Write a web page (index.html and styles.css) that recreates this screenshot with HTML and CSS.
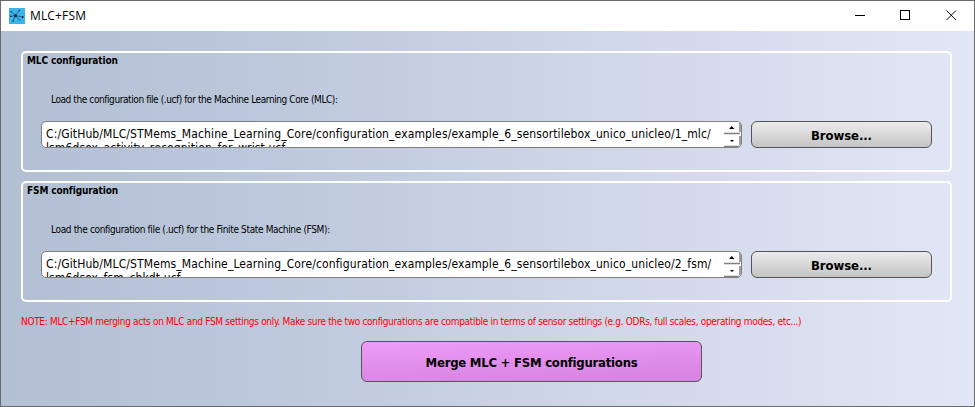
FILE: index.html
```html
<!DOCTYPE html>
<html lang="en">
<head>
<meta charset="utf-8">
<title>MLC+FSM</title>
<link rel="stylesheet" href="styles.css">
</head>
<body>
<div class="window">
  <header class="titlebar">
    <svg class="app-icon" width="16" height="16" viewBox="0 0 16 16">
      <rect width="16" height="16" fill="#3cb4e7"/>
      <path d="M6.500 7.500 2 3.500M6.500 7.500 1.500 8.500M6.500 7.500 10 2.500M6.500 7.500l7 1.500M6.500 7.500 4 13M6.500 7.500l5 5.500" stroke="#03234b" stroke-width=".5"/>
      <g fill="#03234b"><circle cx="6.500" cy="7.700" r="1.500"/><circle cx="2" cy="3.700" r=".7"/><circle cx="1.800" cy="8.300" r=".7"/><circle cx="10.300" cy="2.500" r=".7"/><circle cx="13.700" cy="9" r="1"/><circle cx="4" cy="13" r=".7"/></g>
    </svg>
    <h1 class="title">MLC+FSM</h1>
    <svg class="controls" width="119" height="30" viewBox="0 0 119 30" fill="none" stroke="#000">
      <path d="M0 14.500h10" /><rect x="45.500" y="9.500" width="9" height="9"/><path d="m91.500 9.500 9.500 9.500m0-9.500-9.500 9.500"/>
    </svg>
  </header>
  <main class="content">
    <section class="group">
      <h2 class="legend">MLC configuration</h2>
      <p class="label label-mlc">Load the configuration file (.ucf) for the Machine Learning Core (MLC):</p>
      <div class="row">
        <div class="field">
          <div class="path"><div class="line">C:/GitHub/MLC/STMems_Machine_Learning_Core/configuration_examples/example_6_sensortilebox_unico_unicleo/1_mlc/</div><div class="line">lsm6dsox_activity_recognition_for_wrist.ucf</div></div>
          <svg class="spin" width="18" height="25" viewBox="0 0 18 25"><path d="M1 11.500h16M1 24.500h16M17 1v9M17 14v9" stroke="#808080" stroke-width="1.500"/><path d="M6 7h5.500L8.750 4zM7 18h4l-2 2z"/></svg>
        </div>
        <button class="browse"><span>Browse...</span></button>
      </div>
    </section>
    <section class="group">
      <h2 class="legend">FSM configuration</h2>
      <p class="label label-fsm">Load the configuration file (.ucf) for the Finite State Machine (FSM):</p>
      <div class="row">
        <div class="field">
          <div class="path"><div class="line">C:/GitHub/MLC/STMems_Machine_Learning_Core/configuration_examples/example_6_sensortilebox_unico_unicleo/2_fsm/</div><div class="line">lsm6dsox_fsm_chkdt.ucf</div></div>
          <svg class="spin" width="18" height="25" viewBox="0 0 18 25"><path d="M1 11.500h16M1 24.500h16M17 1v9M17 14v9" stroke="#808080" stroke-width="1.500"/><path d="M6 7h5.500L8.750 4zM7 18h4l-2 2z"/></svg>
        </div>
        <button class="browse"><span>Browse...</span></button>
      </div>
    </section>
    <p class="note">NOTE: MLC+FSM merging acts on MLC and FSM settings only. Make sure the two configurations are compatible in terms of sensor settings (e.g. ODRs, full scales, operating modes, etc...)</p>
    <button class="merge"><span>Merge MLC + FSM configurations</span></button>
  </main>
</div>
</body>
</html>
```
FILE: styles.css
```css
* { box-sizing: border-box; margin: 0; padding: 0; }
body { font-family: "DejaVu Sans Condensed", "DejaVu Sans", sans-serif; font-stretch: condensed; color: #000; overflow: hidden; }
.window { width: 975px; height: 407px; border: 1px solid #6b6b6b; background: linear-gradient(90deg, #b3c0d4, #bac6da 22%, #c5cee1 42%, #d4daeb 70%, #e1e7f6); }
.titlebar { display: flex; align-items: center; height: 30px; padding: 0 0 0 8px; background: #fff; }
.app-icon { margin-top: -1px; }
.title { margin: -1px 0 0 5px; font: 12px "Open Sans", sans-serif; letter-spacing: .15px; }
.controls { margin-left: auto; }
.content { padding: 20px 22px 0 20px; }
.group { height: 121px; margin-bottom: 9px; border: 2px solid #fff; border-radius: 5px; padding: 1px 18px 0; }
.legend { margin-left: -14px; font-size: 10px; font-weight: bold; line-height: 14px; letter-spacing: -.11px; white-space: nowrap; }
.label { margin: 25px 0 0 10px; font-size: 10px; line-height: 13px; white-space: nowrap; }
.label-mlc { letter-spacing: -.41px; }
.label-fsm { letter-spacing: -.35px; }
.row { display: flex; gap: 9px; margin-top: 15px; }
.field { display: flex; width: 701px; height: 27px; overflow: hidden; border: 1px solid #808080; border-radius: 5px; background: #fff; }
.path { flex: 1; min-width: 0; padding: 5px 0 0 4px; font-size: 12px; letter-spacing: .12px; white-space: nowrap; }
.line { height: 14px; line-height: 14px; }
.spin { flex: none; }
button { display: flex; align-items: center; justify-content: center; border: 1px solid #555; border-radius: 6px; font-family: inherit; font-weight: bold; color: #000; white-space: nowrap; }
.browse { width: 181px; height: 27px; padding-top: 1px; background: linear-gradient(#ebebeb, #c5c5c5); font-size: 13px; letter-spacing: -.1px; }
.note { margin-top: 13px; color: #f00; font-size: 10px; line-height: 14px; letter-spacing: -.32px; white-space: nowrap; }
.merge { width: 341px; height: 41px; margin: 12px 0 0 340px; padding-top: 2px; background: linear-gradient(178deg, #ee9cf8, #d985e3 85%); font-size: 13px; letter-spacing: -.24px; }
```
